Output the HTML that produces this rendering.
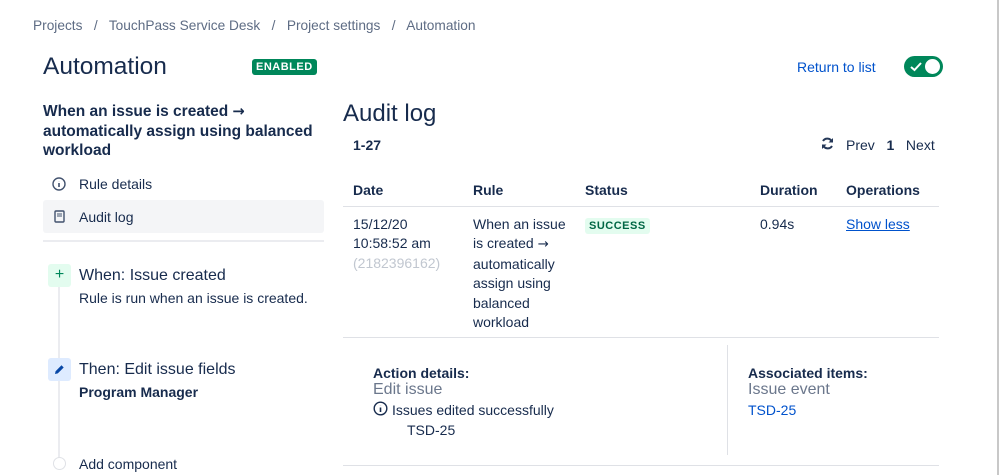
<!DOCTYPE html>
<html><head><meta charset="utf-8"><style>
body{margin:0;width:999px;height:475px;overflow:hidden;background:#fff;font-family:"Liberation Sans",sans-serif;color:#172b4d;position:relative}
.a{position:absolute;white-space:nowrap}
.t14{font-size:14px}
.b{font-weight:bold}
.ar{font-family:"DejaVu Sans",sans-serif;font-size:0.95em}
</style></head><body>
<div class="a" style="left:33px;top:18px;color:#5e6c84;font-size:13.7px">Projects &nbsp;&nbsp;/&nbsp;&nbsp; TouchPass Service Desk &nbsp;&nbsp;/&nbsp;&nbsp; Project settings &nbsp;&nbsp;/&nbsp;&nbsp; Automation</div>
<div class="a" style="left:43px;top:53px;font-size:24.5px;font-weight:500">Automation</div>
<div class="a b" style="left:252px;top:59px;font-size:11px;background:#00875a;color:#fff;padding:2px 4px;border-radius:3px;letter-spacing:.5px">ENABLED</div>
<div class="a t14" style="left:797px;top:59px;color:#0052cc">Return to list</div>
<div class="a" style="left:904px;top:56px;width:39px;height:21px;border-radius:11px;background:#00875a">
<svg class="a" style="left:6px;top:5px" width="12" height="11" viewBox="0 0 12 11"><path d="M1 6l3.5 3L11 2" stroke="#fff" stroke-width="2" fill="none"/></svg>
<div class="a" style="left:21px;top:3px;width:15px;height:15px;border-radius:50%;background:#fff"></div></div>
<div class="a b" style="left:43px;top:102px;font-size:15.5px;line-height:19.5px;white-space:normal;width:280px">When an issue is created <span class="ar">→</span> automatically assign using balanced workload</div>
<svg class="a" style="left:52px;top:177px" width="14" height="14" viewBox="0 0 14 14"><circle cx="7" cy="7" r="6" stroke="#42526e" stroke-width="1.4" fill="none"/><path d="M7 6v4M7 4v.1" stroke="#42526e" stroke-width="1.6"/></svg>
<div class="a t14" style="left:79px;top:176px">Rule details</div>
<div class="a" style="left:43px;top:200px;width:281px;height:33px;background:#f4f5f7;border-radius:3px"></div>
<svg class="a" style="left:54px;top:210px" width="11" height="13" viewBox="0 0 11 13"><rect x="1" y="1" width="9" height="11" rx="1" stroke="#42526e" stroke-width="1.4" fill="none"/><path d="M3 4h5M3 6h5" stroke="#42526e"/></svg>
<div class="a t14" style="left:79px;top:209px">Audit log</div>
<div class="a" style="left:43px;top:240px;width:281px;height:2px;background:#ebecf0"></div>
<div class="a" style="left:58px;top:285px;width:2px;height:180px;background:#ebecf0"></div>
<div class="a" style="left:48px;top:264px;width:23px;height:23px;background:#e3fcef;border-radius:3px;color:#00875a;font-size:16px;text-align:center;line-height:22px">+</div>
<div class="a" style="left:79px;top:267px;font-size:16px">When: Issue created</div>
<div class="a t14" style="left:79px;top:290px">Rule is run when an issue is created.</div>
<div class="a" style="left:48px;top:358px;width:23px;height:23px;background:#deebff;border-radius:3px"></div>
<svg class="a" style="left:53px;top:363px" width="13" height="13" viewBox="0 0 13 13"><path d="M2 11l.6-2.8L8.5 2.3l2.2 2.2-5.9 5.9z" fill="#0747a6"/></svg>
<div class="a" style="left:79px;top:361px;font-size:16px">Then: Edit issue fields</div>
<div class="a t14 b" style="left:79px;top:384px">Program Manager</div>
<div class="a" style="left:53px;top:457px;width:11px;height:11px;border:1px solid #dfe1e6;border-radius:50%;background:#fff"></div>
<div class="a t14" style="left:79px;top:456px">Add component</div>

<div class="a" style="left:343px;top:100px;font-size:24px">Audit log</div>
<div class="a t14 b" style="left:353px;top:137px">1-27</div>
<svg class="a" style="left:820px;top:136px" width="15" height="15" viewBox="0 0 15 15"><path d="M3 9a5 5 0 0 0 9 1M12 6a5 5 0 0 0-9-1" stroke="#253858" stroke-width="2" fill="none"/><path d="M13 2v4.5H8.5zM2 13V8.5h4.5z" fill="#253858"/></svg>
<div class="a t14" style="left:846px;top:137px">Prev &nbsp;&nbsp;<b>1</b>&nbsp;&nbsp; Next</div>
<div class="a t14 b" style="left:353px;top:182px">Date</div>
<div class="a t14 b" style="left:473px;top:182px">Rule</div>
<div class="a t14 b" style="left:585px;top:182px">Status</div>
<div class="a t14 b" style="left:760px;top:182px">Duration</div>
<div class="a t14 b" style="left:846px;top:182px">Operations</div>
<div class="a" style="left:343px;top:206px;width:596px;height:1px;background:#dfe1e6"></div>
<div class="a t14" style="left:353px;top:215px;line-height:19.4px">15/12/20<br>10:58:52 am<br><span style="color:#c1c7d0">(2182396162)</span></div>
<div class="a t14" style="left:473px;top:215px;line-height:19.4px">When an issue<br>is created <span class="ar">→</span><br>automatically<br>assign using<br>balanced<br>workload</div>
<div class="a b" style="left:585px;top:218px;font-size:11px;background:#e3fcef;color:#006644;padding:2px 4px;border-radius:3px;letter-spacing:.5px">SUCCESS</div>
<div class="a t14" style="left:760px;top:216px">0.94s</div>
<div class="a t14" style="left:846px;top:216px;color:#0052cc;text-decoration:underline">Show less</div>
<div class="a" style="left:343px;top:337px;width:596px;height:1px;background:#dfe1e6"></div>
<div class="a t14 b" style="left:373px;top:365px">Action details:</div>
<div class="a" style="left:373px;top:381px;font-size:16px;color:#6b778c">Edit issue</div>
<svg class="a" style="left:373px;top:401px" width="15" height="15" viewBox="0 0 15 15"><circle cx="7.5" cy="7.5" r="6.3" stroke="#172b4d" stroke-width="1.4" fill="none"/><path d="M7.5 6.5v4.5M7.5 4v.1" stroke="#172b4d" stroke-width="1.6"/></svg>
<div class="a t14" style="left:392px;top:402px">Issues edited successfully</div>
<div class="a t14" style="left:407px;top:422px">TSD-25</div>
<div class="a" style="left:727px;top:345px;width:1px;height:110px;background:#dfe1e6"></div>
<div class="a t14 b" style="left:748px;top:365px">Associated items:</div>
<div class="a" style="left:748px;top:381px;font-size:16px;color:#6b778c">Issue event</div>
<div class="a t14" style="left:748px;top:402px;color:#0052cc">TSD-25</div>
<div class="a" style="left:343px;top:465px;width:596px;height:1px;background:#dfe1e6"></div>
<div class="a" style="left:997px;top:0;width:2px;height:475px;background:#c8c8c8"></div>
</body></html>
